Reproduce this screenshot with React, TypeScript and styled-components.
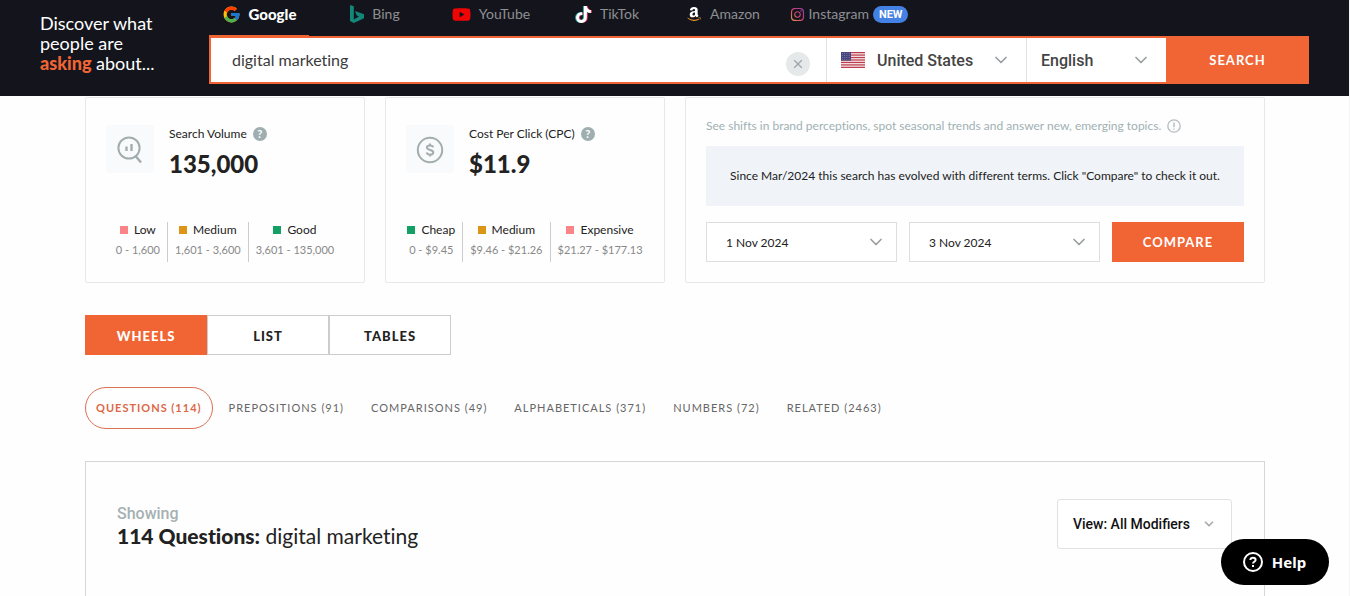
import React, { useState } from 'react';
import styled, { createGlobalStyle } from 'styled-components';
import { FcGoogle } from 'react-icons/fc';
import { FaAmazon, FaInstagram, FaTiktok, FaYoutube } from 'react-icons/fa';
import { ChevronDown, X } from 'lucide-react';

const orange = '#f16534';
const sans = 'Lato, "Open Sans", sans-serif';
const roboto = 'Roboto, "Liberation Sans", sans-serif';

const GlobalStyle = createGlobalStyle`
  *, *::before, *::after { box-sizing: border-box; }
  body {
    margin: 0;
    background: #fefefe;
    color: #222;
    font-family: ${sans};
    font-variant-ligatures: none;
  }
  button, input, select { font-family: inherit; font-variant-ligatures: none; margin: 0; }
  button, select { cursor: pointer; }
  h1, h2, p, dl, dd, dt { margin: 0; }
`;

const Page = styled.div`
  display: flex;
  flex-direction: column;
  min-height: 100vh;
  border-right: 1px solid #f4f4f4;
`;

const Header = styled.header`
  display: flex;
  height: 96px;
  padding: 0 40px;
  background: #14151c;
  color: #fff;
`;

const Tagline = styled.p`
  flex: 0 0 169px;
  padding-top: 13px;
  font-size: 18px;
  line-height: 20px;
  strong { color: ${orange}; font-weight: 900; }
`;

const SearchArea = styled.div`
  flex: 1;
  min-width: 0;
`;

const Sources = styled.nav`
  display: flex;
  gap: 16px;
  height: 36px;
`;

const Source = styled.a<{ $active?: boolean; $wide?: boolean }>`
  display: flex;
  align-items: center;
  justify-content: center;
  gap: ${p => (p.$wide ? 4 : 8)}px;
  width: ${p => (p.$wide ? 120 : 100)}px;
  padding-bottom: ${p => (p.$active ? 7 : 8)}px;
  border-bottom: ${p => (p.$active ? `1px solid ${orange}` : '0')};
  color: ${p => (p.$active ? '#fff' : '#8e8f93')};
  font-size: ${p => (p.$active ? 15 : 14)}px;
  line-height: 18px;
  font-weight: ${p => (p.$active ? 900 : 400)};
  white-space: nowrap;
  text-decoration: none;
  svg { flex: none; }
`;

const SourceName = styled.span`
  padding-bottom: 1px;
`;

const TikTokMark = styled(FaTiktok)`
  color: #fff;
  filter: drop-shadow(-1px 0 0 #1fa8a6) drop-shadow(1px 0 0 #d92a50);
`;

const AmazonMark = styled(FaAmazon)`
  path { fill: url(#amazonFill); }
`;

const InstagramMark = styled(FaInstagram)`
  path { fill: url(#instagramFill); }
`;

const Defs = styled.svg`
  position: absolute;
  width: 0;
  height: 0;
`;

const Badge = styled.span`
  padding: 0 6px;
  border-radius: 9px;
  background: #4481e4;
  color: #fff;
  font: 700 11px/17px ${roboto};
`;

const SearchForm = styled.form`
  display: flex;
  height: 48px;
  border: 2px solid ${orange};
  background: #fff;
`;

const SearchInput = styled.input`
  flex: 1;
  min-width: 0;
  padding: 0 21px 2px;
  border: 0;
  outline: 0;
  background: none;
  color: #3b3b3b;
  font-size: 16px;
`;

const ClearButton = styled.button`
  display: flex;
  align-items: center;
  justify-content: center;
  align-self: flex-end;
  width: 24px;
  height: 24px;
  margin: 0 16px 6px 0;
  padding: 0;
  border: 0;
  border-radius: 50%;
  background: #e6e9ea;
  color: #9ba5a8;
`;

const Dropdown = styled.label<{ $width: number }>`
  position: relative;
  display: flex;
  align-items: center;
  gap: 12px;
  width: ${p => p.$width}px;
  padding-left: 14px;
  border-left: 1px solid #e2e2e2;
  color: #9a9d9f;
`;

const DropdownSelect = styled.select`
  flex: 1;
  min-width: 0;
  height: 100%;
  padding: 0;
  border: 0;
  appearance: none;
  background: none;
  color: #444;
  font: 500 16px ${roboto};
`;

const Chevron = styled(ChevronDown)<{ $inset: number }>`
  position: absolute;
  top: calc(50% - 10px);
  right: ${p => p.$inset}px;
  pointer-events: none;
`;

const PrimaryButton = styled.button<{ $width: number; $flush?: boolean }>`
  flex: none;
  width: ${p => p.$width}px;
  margin: ${p => (p.$flush ? '-2px -2px -2px 0' : '0')};
  padding: 0;
  border: 0;
  background: ${orange};
  color: #fff;
  font-size: 13px;
  font-weight: 700;
  letter-spacing: 1px;
`;

const Main = styled.main`
  display: flex;
  flex: 1;
  flex-direction: column;
  gap: 32px;
  padding: 1px 84px 0 85px;
`;

const Cards = styled.section`
  display: grid;
  grid-template-columns: minmax(0, 14fr) minmax(0, 14fr) minmax(0, 29fr);
  gap: 20px;
`;

const Card = styled.article`
  display: flex;
  flex-direction: column;
  justify-content: space-between;
  height: 186px;
  padding: 18px 20px 20px;
  border: 1px solid #e8e8eb;
  border-radius: 2px;
`;

const Metric = styled.div`
  display: flex;
  gap: 15px;
  padding-top: 9px;
`;

const MetricIcon = styled.div`
  display: flex;
  align-items: center;
  justify-content: center;
  width: 48px;
  height: 48px;
  padding-top: 2px;
  border-radius: 3px;
  background: #f9fafb;
`;

const MetricLabel = styled.p`
  display: flex;
  align-items: center;
  gap: 6px;
  font-size: 12px;
  line-height: 18px;
`;

const MetricValue = styled.p`
  padding-top: 4px;
  font-size: 24px;
  font-weight: 900;
  line-height: 34px;
`;

const HelpDot = styled.button`
  width: 14px;
  height: 14px;
  padding: 0;
  border: 0;
  border-radius: 50%;
  background: #9faeb0;
  color: #fff;
  font-size: 11px;
  font-weight: 700;
  line-height: 14px;
`;

const Legend = styled.dl`
  display: flex;
  justify-content: center;
`;

const LegendItem = styled.div`
  padding: 0 7px;
  text-align: center;
  white-space: nowrap;
  & + & { border-left: 1px solid #ccc; }
`;

const LegendName = styled.dt<{ $color: string }>`
  display: flex;
  align-items: center;
  justify-content: center;
  gap: 6px;
  font-size: 12px;
  line-height: 16px;
  &::before {
    content: '';
    width: 8px;
    height: 8px;
    background: ${p => p.$color};
  }
`;

const LegendRange = styled.dd`
  color: #888;
  font-size: 11px;
  line-height: 24px;
`;

const Blurb = styled.p`
  display: flex;
  align-items: center;
  gap: 6px;
  color: #9fb1b3;
  font-size: 12px;
  line-height: 20px;
  white-space: nowrap;
`;

const Notice = styled.p`
  margin-bottom: 6px;
  background: #f0f4f8;
  font-size: 12px;
  line-height: 60px;
  text-align: center;
  white-space: nowrap;
`;

const CompareForm = styled.form`
  display: flex;
  gap: 12px;
  height: 40px;
`;

const DateField = styled.label`
  position: relative;
  flex: 1;
  color: #9a9d9f;
`;

const DateSelect = styled.select`
  width: 100%;
  height: 100%;
  padding: 0 19px;
  border: 1px solid #dedede;
  border-radius: 0;
  appearance: none;
  background: #fff;
  color: #222;
  font-size: 12px;
`;

const ViewSwitch = styled.div`
  display: flex;
  height: 40px;
`;

const ViewButton = styled.button<{ $active: boolean }>`
  width: 122px;
  padding: 2px 0 0;
  border: 1px solid ${p => (p.$active ? orange : '#ccc')};
  background: ${p => (p.$active ? orange : '#fff')};
  color: ${p => (p.$active ? '#fff' : '#222')};
  font-size: 13px;
  font-weight: 900;
  letter-spacing: 1px;
`;

const Groups = styled.div`
  display: flex;
  gap: 5px;
  height: 42px;
`;

const GroupButton = styled.button<{ $active: boolean }>`
  padding: 0 10px 1px;
  border: 1px solid ${p => (p.$active ? '#dc7154' : 'transparent')};
  border-radius: 21px;
  background: none;
  color: ${p => (p.$active ? '#dc6847' : '#666')};
  font-size: 11px;
  font-weight: ${p => (p.$active ? 700 : 400)};
  letter-spacing: 1px;
  white-space: nowrap;
`;

const Results = styled.section`
  display: flex;
  flex: 1;
  justify-content: space-between;
  align-items: flex-start;
  padding: 37px 32px 0 31px;
  border: 1px solid #d4d6d8;
  border-bottom: 0;
`;

const Showing = styled.p`
  padding-top: 5px;
  color: #a5b1b3;
  font: 500 16px/20px ${roboto};
`;

const ResultsTitle = styled.h1`
  font-size: 21px;
  font-weight: 400;
  line-height: 24px;
  strong { font-weight: 900; }
`;

const ModifierButton = styled.button`
  display: flex;
  align-items: center;
  gap: 12px;
  height: 50px;
  padding: 0 15px;
  border: 1px solid #e2e2e2;
  border-radius: 3px;
  background: #fff;
  color: #111;
  font: 500 14px ${roboto};
  svg { color: #aaa; }
`;

const HelpButton = styled.button`
  position: fixed;
  right: 21px;
  bottom: 11px;
  display: flex;
  align-items: center;
  justify-content: center;
  gap: 8px;
  width: 108px;
  height: 46px;
  padding: 0 2px 0 0;
  border: 0;
  border-radius: 23px;
  background: #000;
  color: #fff;
  font: 700 15px "Noto Sans", sans-serif;
`;

const BingMark = () => (
  <svg width="14" height="18" viewBox="0 0 14 18" aria-hidden="true">
    <path fill="#12877a" d="M0 0 3.8 1.3V14.4L9 11.4 6.6 10.2 5 6.1 14 9.3V13.2L3.8 18 0 15.9Z" />
  </svg>
);

const Flag = () => (
  <svg width="24" height="16" viewBox="0 0 24 16" aria-hidden="true">
    <rect width="24" height="16" fill="#f5e9eb" />
    {[0, 1, 2, 3, 4, 5, 6].map(i => (
      <rect key={i} y={i * 2.46} width="24" height="1.23" fill="#bd3d4c" />
    ))}
    <rect width="10" height="8.6" fill="#46467f" />
    {[1.5, 3.5, 5.5, 7.3].map(y =>
      [1.5, 3.7, 5.9, 8.1].map(x => <circle key={`${x}-${y}`} cx={x} cy={y} r=".4" fill="#b4b4d0" />),
    )}
  </svg>
);

const VolumeIcon = () => (
  <svg width="28" height="30" viewBox="0 0 28 30" fill="none" stroke="#a3adb0" aria-hidden="true">
    <circle cx="13" cy="13" r="10.6" strokeWidth="2" />
    <path d="M19.5 21 25 27.5" strokeWidth="2.4" />
    <path d="M10.5 11.5V16M15.5 9V16" strokeWidth="2.4" />
  </svg>
);

const CostIcon = () => (
  <svg width="28" height="28" viewBox="0 0 28 28" fill="none" stroke="#a3adb0" strokeWidth="2" aria-hidden="true">
    <circle cx="14" cy="14" r="12.2" />
    <path d="M17.2 11.2C16.8 9.9 15.6 9.4 14 9.4c-1.8 0-3.1.8-3.1 2.2 0 3.2 6.4 1.5 6.4 4.7 0 1.5-1.4 2.4-3.3 2.4-1.8 0-3-.7-3.4-2.1M14 7.4v2M14 18.6v2" />
  </svg>
);

const InfoIcon = () => (
  <svg width="14" height="14" viewBox="0 0 14 14" fill="none" stroke="#b3bcbe" aria-hidden="true">
    <circle cx="7" cy="7" r="6.2" strokeWidth="1.3" />
    <path d="M7 3.4V8.2M7 9.4V10.7" strokeWidth="1.4" />
  </svg>
);

const QuestionIcon = () => (
  <svg width="22" height="22" viewBox="0 0 22 22" fill="none" stroke="#fff" strokeWidth="2" aria-hidden="true">
    <circle cx="11" cy="11" r="9" />
    <path d="M8.4 9.1c0-1.5 1.1-2.4 2.6-2.4s2.6.9 2.6 2.2c0 1.8-2.6 1.9-2.6 3.7M11 14v2" />
  </svg>
);

type Range = { name: string; range: string; color: string };

const red = '#fa8487';
const amber = '#dd9516';
const green = '#12a067';

const volumeRanges: Range[] = [
  { name: 'Low', range: '0 - 1,600', color: red },
  { name: 'Medium', range: '1,601 - 3,600', color: amber },
  { name: 'Good', range: '3,601 - 135,000', color: green },
];

const costRanges: Range[] = [
  { name: 'Cheap', range: '0 - $9.45', color: green },
  { name: 'Medium', range: '$9.46 - $21.26', color: amber },
  { name: 'Expensive', range: '$21.27 - $177.13', color: red },
];

const groups = [
  'QUESTIONS (114)',
  'PREPOSITIONS (91)',
  'COMPARISONS (49)',
  'ALPHABETICALS (371)',
  'NUMBERS (72)',
  'RELATED (2463)',
];

type MetricCardProps = { icon: React.ReactNode; label: string; value: string; ranges: Range[] };

const MetricCard = ({ icon, label, value, ranges }: MetricCardProps) => (
  <Card>
    <Metric>
      <MetricIcon>{icon}</MetricIcon>
      <div>
        <MetricLabel>
          {label}
          <HelpDot aria-label={`About ${label}`}>?</HelpDot>
        </MetricLabel>
        <MetricValue>{value}</MetricValue>
      </div>
    </Metric>
    <Legend>
      {ranges.map(r => (
        <LegendItem key={r.name}>
          <LegendName $color={r.color}>{r.name}</LegendName>
          <LegendRange>{r.range}</LegendRange>
        </LegendItem>
      ))}
    </Legend>
  </Card>
);

export default function App() {
  const [query, setQuery] = useState('digital marketing');
  const [view, setView] = useState('WHEELS');
  const [group, setGroup] = useState(groups[0]);

  return (
    <Page>
      <GlobalStyle />
      <Defs aria-hidden="true">
        <linearGradient id="amazonFill" x1="0" y1="0" x2="0" y2="1">
          <stop offset=".73" stopColor="#fff" />
          <stop offset=".73" stopColor="#e9942a" />
        </linearGradient>
        <linearGradient id="instagramFill" x1="0" y1="1" x2="1" y2="0">
          <stop offset="0" stopColor="#e8a050" />
          <stop offset=".5" stopColor="#cf3f70" />
          <stop offset="1" stopColor="#8e3fae" />
        </linearGradient>
      </Defs>

      <Header>
        <Tagline>
          Discover what
          <br />
          people are
          <br />
          <strong>asking</strong> about...
        </Tagline>
        <SearchArea>
          <Sources>
            <Source href="#google" $active><FcGoogle size={19} /><SourceName>Google</SourceName></Source>
            <Source href="#bing"><BingMark /><SourceName>Bing</SourceName></Source>
            <Source href="#youtube"><FaYoutube size={19} color="#f00505" /><SourceName>YouTube</SourceName></Source>
            <Source href="#tiktok"><TikTokMark size={17} /><SourceName>TikTok</SourceName></Source>
            <Source href="#amazon"><AmazonMark size={16} /><SourceName>Amazon</SourceName></Source>
            <Source href="#instagram" $wide>
              <InstagramMark size={15} /><SourceName>Instagram</SourceName><Badge>NEW</Badge>
            </Source>
          </Sources>
          <SearchForm onSubmit={e => e.preventDefault()}>
            <SearchInput aria-label="Search term" value={query} onChange={e => setQuery(e.target.value)} />
            <ClearButton type="button" aria-label="Clear" onClick={() => setQuery('')}>
              <X size={14} />
            </ClearButton>
            <Dropdown $width={200}>
              <Flag />
              <DropdownSelect aria-label="Country"><option>United States</option></DropdownSelect>
              <Chevron size={20} $inset={15} />
            </Dropdown>
            <Dropdown $width={140}>
              <DropdownSelect aria-label="Language"><option>English</option></DropdownSelect>
              <Chevron size={20} $inset={15} />
            </Dropdown>
            <PrimaryButton $width={143} $flush>SEARCH</PrimaryButton>
          </SearchForm>
        </SearchArea>
      </Header>

      <Main>
        <Cards>
          <MetricCard icon={<VolumeIcon />} label="Search Volume" value="135,000" ranges={volumeRanges} />
          <MetricCard icon={<CostIcon />} label="Cost Per Click (CPC)" value="$11.9" ranges={costRanges} />
          <Card>
            <Blurb>
              See shifts in brand perceptions, spot seasonal trends and answer new, emerging topics.
              <InfoIcon />
            </Blurb>
            <Notice>
              Since Mar/2024 this search has evolved with different terms. Click "Compare" to check it out.
            </Notice>
            <CompareForm onSubmit={e => e.preventDefault()}>
              <DateField>
                <DateSelect aria-label="From date"><option>1 Nov 2024</option></DateSelect>
                <Chevron size={20} $inset={11} />
              </DateField>
              <DateField>
                <DateSelect aria-label="To date"><option>3 Nov 2024</option></DateSelect>
                <Chevron size={20} $inset={11} />
              </DateField>
              <PrimaryButton $width={132}>COMPARE</PrimaryButton>
            </CompareForm>
          </Card>
        </Cards>

        <ViewSwitch>
          {['WHEELS', 'LIST', 'TABLES'].map(v => (
            <ViewButton key={v} $active={v === view} onClick={() => setView(v)}>{v}</ViewButton>
          ))}
        </ViewSwitch>

        <Groups>
          {groups.map(g => (
            <GroupButton key={g} $active={g === group} onClick={() => setGroup(g)}>{g}</GroupButton>
          ))}
        </Groups>

        <Results>
          <div>
            <Showing>Showing</Showing>
            <ResultsTitle><strong>114 Questions:</strong> digital marketing</ResultsTitle>
          </div>
          <ModifierButton>
            View: All Modifiers
            <ChevronDown size={14} strokeWidth={3} />
          </ModifierButton>
        </Results>
      </Main>

      <HelpButton><QuestionIcon />Help</HelpButton>
    </Page>
  );
}
